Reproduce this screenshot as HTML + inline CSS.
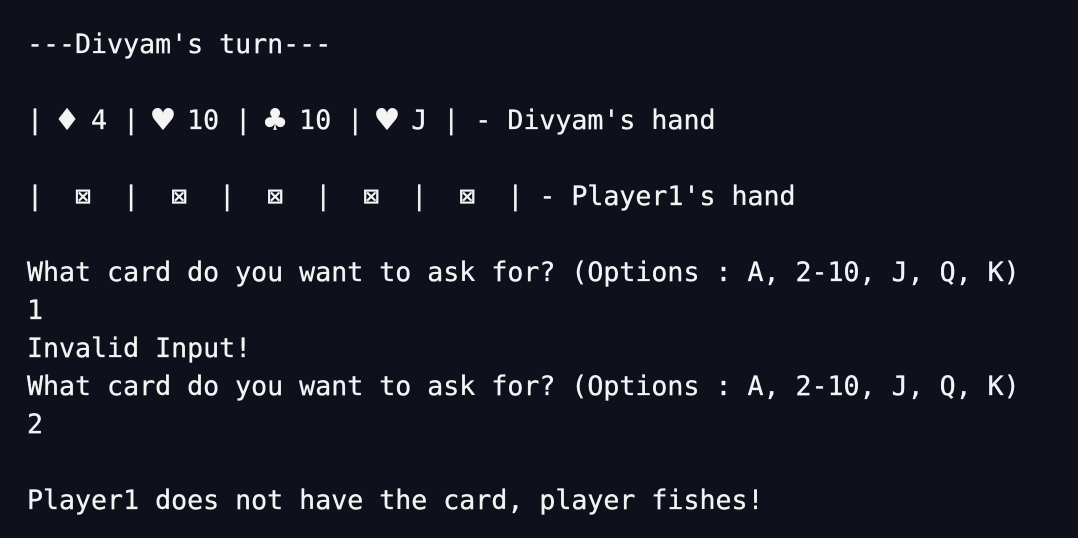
<!DOCTYPE html>
<html><head><meta charset="utf-8"><style>
html,body{margin:0;padding:0;background:#0e111c;width:1078px;height:538px;overflow:hidden}
pre{margin:0;padding:26px 0 0 27px;color:#f4f4f4;font-family:"DejaVu Sans Mono","Liberation Mono",monospace;font-size:26.6px;line-height:38px;white-space:pre;-webkit-text-stroke:0.3px #f4f4f4}
.s{display:inline-block;width:0.602em;text-align:center;transform:scale(1.35)}
</style></head><body><pre>---Divyam's turn---

| <span class="s">♦</span> 4 | <span class="s">♥</span> 10 | <span class="s">♣</span> 10 | <span class="s">♥</span> J | - Divyam's hand

|  ⊠  |  ⊠  |  ⊠  |  ⊠  |  ⊠  | - Player1's hand

What card do you want to ask for? (Options : A, 2-10, J, Q, K)
1
Invalid Input!
What card do you want to ask for? (Options : A, 2-10, J, Q, K)
2

Player1 does not have the card, player fishes!</pre></body></html>
